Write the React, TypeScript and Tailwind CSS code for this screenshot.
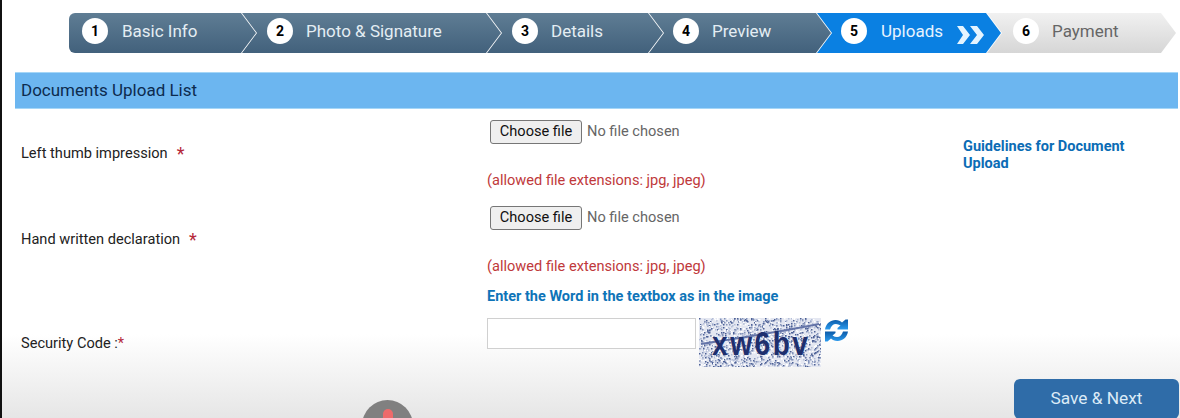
const font = "font-['Roboto',sans-serif]";

type Step = { num: number; label: string; box: string; tone: string; gap: string };

const steps: Step[] = [
  {
    num: 1,
    label: 'Basic Info',
    box: 'w-[187px] pl-[13px] rounded-l-md [clip-path:polygon(0_0,calc(100%-15px)_0,100%_50%,calc(100%-15px)_100%,0_100%)]',
    tone: 'bg-gradient-to-b from-[#5f7d94] to-[#42617c] text-[#e4edf3]',
    gap: 'ml-[14px]',
  },
  {
    num: 2,
    label: 'Photo & Signature',
    box: 'w-[259px] -ml-[14px] pl-[25px] [clip-path:polygon(0_0,calc(100%-15px)_0,100%_50%,calc(100%-15px)_100%,0_100%,15px_50%)]',
    tone: 'bg-gradient-to-b from-[#5f7d94] to-[#42617c] text-[#e4edf3]',
    gap: 'ml-[13px]',
  },
  {
    num: 3,
    label: 'Details',
    box: 'w-[176px] -ml-[14px] pl-[25px] [clip-path:polygon(0_0,calc(100%-15px)_0,100%_50%,calc(100%-15px)_100%,0_100%,15px_50%)]',
    tone: 'bg-gradient-to-b from-[#5f7d94] to-[#42617c] text-[#e4edf3]',
    gap: 'ml-[13px]',
  },
  {
    num: 4,
    label: 'Preview',
    box: 'w-[182px] -ml-[14px] pl-[24px] [clip-path:polygon(0_0,calc(100%-15px)_0,100%_50%,calc(100%-15px)_100%,0_100%,15px_50%)]',
    tone: 'bg-gradient-to-b from-[#5f7d94] to-[#42617c] text-[#e4edf3]',
    gap: 'ml-[13px]',
  },
  {
    num: 5,
    label: 'Uploads',
    box: 'w-[184px] -ml-[14px] pl-[24px] [clip-path:polygon(0_0,calc(100%-15px)_0,100%_50%,calc(100%-15px)_100%,0_100%,15px_50%)]',
    tone: 'bg-[#0a80e2] text-[#e6f3ff]',
    gap: 'ml-[14px]',
  },
  {
    num: 6,
    label: 'Payment',
    box: 'w-[189px] -ml-[14px] pl-[26px] [clip-path:polygon(0_0,calc(100%-15px)_0,100%_50%,calc(100%-15px)_100%,0_100%,15px_50%)]',
    tone: 'bg-gradient-to-b from-[#f1f1f1] to-[#d6d6d6] text-[#666666]',
    gap: 'ml-[13px]',
  },
];

function Stepper() {
  return (
    <div className="flex h-10 ml-[69px]">
      {steps.map((s) => (
        <div key={s.num} className={`flex items-center shrink-0 pb-1 ${s.box} ${s.tone}`}>
          <span className="flex items-center justify-center w-[26px] h-[26px] rounded-full bg-white text-black text-sm font-bold">
            {s.num}
          </span>
          <span className={`${s.gap} text-[17px] leading-none`}>{s.label}</span>
          {s.num === 5 && (
            <svg className="ml-[14px] mt-2" width="27" height="18" viewBox="0 0 27 18">
              <path d="M0 0h6l7 9-7 9H0l6-9zM13 0h7l7 9-7 9h-7l7-9z" fill="#e4f4ff" />
            </svg>
          )}
        </div>
      ))}
    </div>
  );
}

function FileRow({ label }: { label: string }) {
  return (
    <div className="grid grid-cols-[466px_476px_1fr] h-[86px]">
      <div className="flex items-center pt-1 text-[14.6px] text-[#222222]">
        {label}
        <span className="ml-[9px] text-lg leading-none text-[#b5283a]">*</span>
      </div>
      <div className="pt-[11px]">
        <div className="flex items-center pl-[3px]">
          <button className="w-[92px] h-6 border border-[#767676] rounded-[3px] bg-[#efefef] text-[14.6px] text-[#111111]">
            Choose file
          </button>
          <span className="ml-[5px] text-[14.6px] text-[#666666]">No file chosen</span>
        </div>
        <p className="mt-[26px] text-[14.6px] leading-5 text-[#c0393b]">(allowed file extensions: jpg, jpeg)</p>
      </div>
      <div />
    </div>
  );
}

// fixed speckle pattern for the captcha background
const speckles = Array.from({ length: 1500 }, (_, i) => ({
  x: (i * 47 + ((i * i) % 23) * 5) % 122,
  y: (i * 29 + ((i * i) % 31) * 3) % 50,
  c: i % 4 === 0 ? '#4d6196' : i % 4 === 1 ? '#8393ba' : i % 4 === 2 ? '#ffffff' : '#b4bed8',
}));

function Captcha() {
  return (
    <svg className="ml-[3px] shrink-0" width="122" height="49" viewBox="0 0 122 49">
      <rect width="122" height="49" fill="#e4e7f1" />
      {speckles.map((d, i) => (
        <rect key={i} x={d.x} y={d.y} width="1.5" height="1.5" fill={d.c} />
      ))}
      <path d="M2 26 C40 20 80 14 120 6" stroke="#6474a8" strokeWidth="2" fill="none" />
      <text
        transform="translate(13 37) scale(0.85 1)"
        fontFamily="'Liberation Sans', sans-serif"
        fontWeight="700"
        fontSize="33"
        letterSpacing="3"
        fill="#1e2f6e"
      >
        xw6bv
      </text>
    </svg>
  );
}

function RefreshIcon() {
  return (
    <svg className="ml-[4px] mt-[1px] shrink-0" width="23" height="23" viewBox="0 0 23 23">
      <defs>
        <linearGradient id="refresh" x1="0" y1="0" x2="0" y2="1">
          <stop offset="0" stopColor="#0c5aa8" />
          <stop offset="1" stopColor="#2b9bee" />
        </linearGradient>
      </defs>
      <path
        d="M0 10.5C1 4.5 5.5 1 10.5 1c3 0 5 1 6.5 2.5L20.5 0.5l2.5 0V10.5H12.5v-1.5l3-2.5C14 5.5 12.5 5 11 5 8 5 6 7 5 10.5z"
        fill="url(#refresh)"
      />
      <path
        d="M23 12.5C22 18.5 17.5 22 12.5 22c-3 0-5-1-6.5-2.500L2.500 22.500 0 22.500V12.500H10.500v1.500l-3 2.500C9 17.500 10.500 18 12 18c3 0 5-2 6-5.500z"
        fill="url(#refresh)"
      />
    </svg>
  );
}

export default function App() {
  return (
    <div
      className={`relative w-[1180px] h-[418px] overflow-hidden border-l-2 border-[#111111] bg-gradient-to-b from-white from-80% to-[#e6e6e6] pt-[13px] ${font}`}
    >
      <div className="-ml-[2px]">
        <Stepper />

        <div className="mt-[19px] ml-[15px] mr-[2px] h-[37px] flex items-center pl-[6px] bg-[#6cb6f0] border-y border-[#a5d6f7] text-[17px] text-[#0d2b4e]">
          Documents Upload List
        </div>

        <div className="relative pl-[21px]">
          <FileRow label="Left thumb impression" />
          <FileRow label="Hand written declaration" />

          <div className="absolute left-[963px] top-[29px] w-[190px] text-[14.5px] font-bold leading-[17px] text-[#0b6cb5]">
            Guidelines for Document Upload
          </div>

          <div className="grid grid-cols-[466px_1fr]">
            <div className="pt-[52px] text-[14.6px] text-[#222222]">
              Security Code :<span className="text-[#b5283a]">*</span>
            </div>
            <div>
              <p className="pt-[6px] text-[14.5px] font-bold leading-5 text-[#0e74b8]">
                Enter the Word in the textbox as in the image
              </p>
              <div className="flex items-start mt-[11px]">
                <input className="w-[209px] h-[31px] border border-[#d0d0d0] bg-white" />
                <Captcha />
                <RefreshIcon />
              </div>
            </div>
          </div>
        </div>

        <button className="absolute left-[1012px] top-[379px] w-[165px] h-10 rounded-md bg-[#2f6ca8] text-[#dcebf7] text-[17.3px]">
          Save &amp; Next
        </button>

        {/* video overlay bubble peeking in from the bottom */}
        <div className="absolute left-[360px] top-[400px] w-[51px] h-[51px] rounded-full bg-[#808080]">
          <div className="mx-auto mt-[9px] w-[10px] h-[20px] rounded-full bg-[#ee6a6a]" />
        </div>
      </div>
    </div>
  );
}
